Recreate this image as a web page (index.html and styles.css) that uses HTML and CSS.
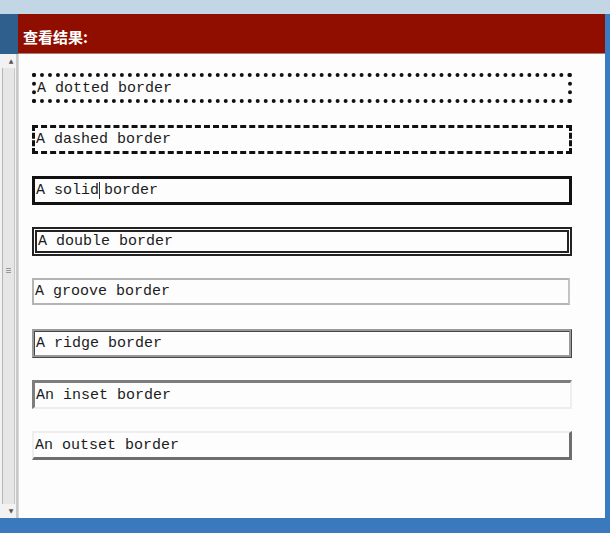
FILE: index.html
```html
<!DOCTYPE html>
<html>
<head>
<meta charset="utf-8">
<link rel="stylesheet" href="styles.css">
</head>
<body>
<div class="frame">
  <div class="topstrip"></div>
  <div class="corner"></div>
  <div class="header">查看结果:</div>
  <div class="edge edge-top"></div>
  <div class="scrollbar">
    <span class="arrow up">▲</span>
    <div class="thumb"><span class="grip"></span></div>
    <span class="arrow down">▼</span>
  </div>
  <div class="panel">
    <div class="box dotted">A dotted border</div>
    <div class="box dashed">A dashed border</div>
    <div class="box solid">A solid<span class="caret"></span>border</div>
    <div class="box double">A double border</div>
    <div class="box groove">A groove border</div>
    <div class="box ridge">A ridge border</div>
    <div class="box inset">An inset border</div>
    <div class="box outset">An outset border</div>
  </div>
  <div class="edge edge-side"></div>
  <div class="bottomstrip"></div>
</div>
</body>
</html>
```
FILE: styles.css
```css
html, body {
  margin: 0;
  padding: 0;
}
body {
  width: 610px;
  height: 533px;
  overflow: hidden;
  background: #3b7bbf;
}
.frame {
  display: grid;
  grid-template-columns: 18px 587px 5px;
  grid-template-rows: 14px 40px 464px 15px;
  width: 610px;
  height: 533px;
}
.topstrip {
  grid-column: 1 / 4;
  grid-row: 1;
  background: #c3d6e6;
}
.corner {
  grid-column: 1;
  grid-row: 2;
  background: #2e5f8d;
}
.header {
  grid-column: 2;
  grid-row: 2;
  background: #900e00;
  color: #fff;
  font-family: "Noto Sans CJK SC", "Noto Sans", sans-serif;
  font-weight: bold;
  font-size: 15px;
  line-height: 1;
  padding: 15px 0 0 5px;
  box-sizing: border-box;
  border-bottom: 1px solid #b07a72;
}
.edge {
  background: #3a7cc4;
}
.edge-top {
  grid-column: 3;
  grid-row: 2;
}
.edge-side {
  grid-column: 3;
  grid-row: 3;
}
.scrollbar {
  grid-column: 1;
  grid-row: 3;
  background: #f2f2f2;
  border-right: 2px solid #c9c9c9;
  display: flex;
  flex-direction: column;
  align-items: flex-end;
  box-sizing: border-box;
}
.arrow {
  font-size: 6px;
  color: #555;
  height: 14px;
  width: 10px;
  line-height: 14px;
  text-align: center;
  font-family: "DejaVu Sans", sans-serif;
}
.thumb {
  flex: 1;
  width: 11px;
  margin-right: 1px;
  background: #e6e6e6;
  border-left: 1px solid #b5b5b5;
  border-right: 1px solid #c8c8c8;
  display: flex;
  justify-content: center;
  align-items: center;
}
.grip {
  display: block;
  width: 5px;
  height: 6px;
  margin-bottom: 30px;
  background: repeating-linear-gradient(#999 0 1px, #e6e6e6 1px 2px);
}
.panel {
  grid-column: 2;
  grid-row: 3;
  background: #fdfdfd;
  padding: 19px 0 0 13px;
  display: flex;
  flex-direction: column;
  gap: 22px;
  border-left: 1px solid #d8d8d8;
}
.bottomstrip {
  grid-column: 1 / 4;
  grid-row: 4;
  background: #3a79bb;
}
.box {
  width: 540px;
  height: 29px;
  box-sizing: border-box;
  display: flex;
  align-items: center;
  padding-left: 1px;
  font-family: "Liberation Mono", "DejaVu Sans Mono", monospace;
  font-size: 15px;
  color: #1c1c1c;
  white-space: pre;
}
.dotted {
  border: 4px dotted #111;
  height: 30px;
}
.dashed {
  border: 3px dashed #111;
}
.solid {
  border: 3px solid #111;
}
.caret {
  display: inline-block;
  width: 1px;
  height: 17px;
  background: #333;
  margin: 0 4px 0 0;
}
.double {
  border: 5px double #222;
}
.groove {
  border-style: solid;
  border-width: 2px;
  border-color: #b4b4b4 #c4c4c4 #b4b4b4 #b4b4b4;
  width: 538px;
  height: 27px;
  margin-bottom: 2px;
}
.ridge {
  border: 3px ridge #9a9a9a;
}
.inset {
  border-style: solid;
  border-width: 3px 2px 2px 3px;
  border-color: #7d7d7d #eeeeee #eeeeee #7d7d7d;
}
.outset {
  border-style: solid;
  border-width: 2px 3px 3px 2px;
  border-color: #eeeeee #6e6e6e #6e6e6e #eeeeee;
}
```
